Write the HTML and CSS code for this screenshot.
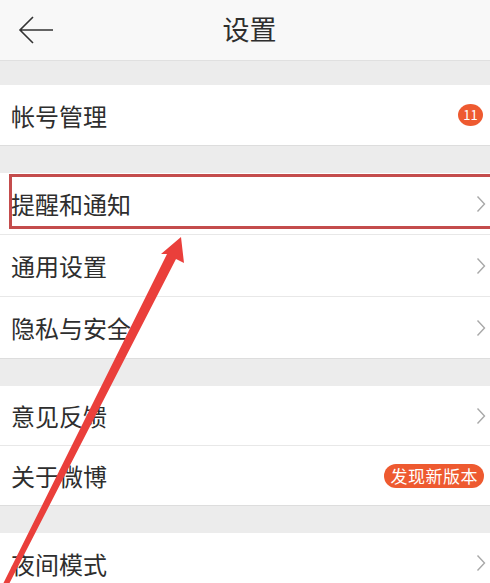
FILE: index.html
```html
<!DOCTYPE html>
<html lang="zh-CN">
<head>
    <meta charset="UTF-8">
    <title>设置</title>
    <link rel="stylesheet" href="styles.css">
</head>
<body>
  <div class="header">
    <svg class="back" width="40" height="30" viewBox="0 0 40 30">
      <path d="M36 15 H3 M16 2 L3 15 L16 28" fill="none" stroke="#333" stroke-width="1.6"/>
    </svg>
    <p class="title">设置</p>
  </div>

  <div class="group">
    <div class="row">
      <p class="label">帐号管理</p>
      <span class="dot">11</span>
    </div>
  </div>

  <div class="group mid">
    <div class="row">
      <p class="label">提醒和通知</p>
      <svg class="chev" width="10" height="18" viewBox="0 0 10 18"><path d="M1.5 1.5 L8.5 9 L1.5 16.5" fill="none" stroke="#a8a8a8" stroke-width="1.4"/></svg>
      <div class="box"></div>
    </div>
    <div class="row">
      <p class="label">通用设置</p>
      <svg class="chev" width="10" height="18" viewBox="0 0 10 18"><path d="M1.5 1.5 L8.5 9 L1.5 16.5" fill="none" stroke="#a8a8a8" stroke-width="1.4"/></svg>
    </div>
    <div class="row">
      <p class="label">隐私与安全</p>
      <svg class="chev" width="10" height="18" viewBox="0 0 10 18"><path d="M1.5 1.5 L8.5 9 L1.5 16.5" fill="none" stroke="#a8a8a8" stroke-width="1.4"/></svg>
    </div>
  </div>

  <div class="group low">
    <div class="row">
      <p class="label">意见反馈</p>
      <svg class="chev" width="10" height="18" viewBox="0 0 10 18"><path d="M1.5 1.5 L8.5 9 L1.5 16.5" fill="none" stroke="#a8a8a8" stroke-width="1.4"/></svg>
    </div>
    <div class="row">
      <p class="label">关于微博</p>
      <span class="pill">发现新版本</span>
    </div>
  </div>

  <div class="group">
    <div class="row">
      <p class="label">夜间模式</p>
      <svg class="chev" width="10" height="18" viewBox="0 0 10 18"><path d="M1.5 1.5 L8.5 9 L1.5 16.5" fill="none" stroke="#a8a8a8" stroke-width="1.4"/></svg>
    </div>
  </div>

  <svg class="arrow" width="490" height="583" viewBox="0 0 490 583">
    <polygon points="181,237 184,263 176,259 8,586 2,586 167,254 161,254" fill="#ea3f3b"/>
  </svg>
</body>
</html>
```

FILE: styles.css
```css
body {
	margin: 0;
	background-color: #ececec;
	font-family: "Noto Sans CJK SC", "Noto Sans", sans-serif;
	color: #2e2e2e;
	overflow: hidden;
	position: relative;
}
p {
	margin: 0;
}
.header {
	height: 60px;
	background-color: #f8f8f8;
	border-bottom: 1px solid #e0e0e0;
	display: flex;
	align-items: center;
	justify-content: center;
	position: relative;
}
.back {
	position: absolute;
	left: 17px;
	top: 15px;
}
.title {
	font-size: 27px;
	margin-left: 9px;
	margin-top: -3px;
}
.group {
	margin-top: 27px;
	background-color: #ffffff;
	border-bottom: 1px solid #dddddd;
}
.header + .group {
	margin-top: 24px;
}
.row {
	height: 60px;
	display: flex;
	align-items: center;
	justify-content: space-between;
	padding: 0 6px 0 11px;
	position: relative;
}
.mid .row {
	height: 61px;
}
.low .row {
	height: 59px;
}
.row + .row {
	border-top: 1px solid #e8e8e8;
}
.label {
	font-size: 24px;
}
.dot {
	width: 25px;
	height: 22px;
	border-radius: 50%;
	background-color: #ee5a30;
	color: #ffffff;
	font-size: 13px;
	line-height: 22px;
	text-align: center;
	margin-right: 1px;
}
.chev {
	margin-right: -2px;
}
.pill {
	background-color: #ee5a30;
	color: #ffffff;
	font-size: 17px;
	line-height: 24px;
	padding: 0 6px 0 7px;
	letter-spacing: 0.5px;
	border-radius: 12px;
}
.box {
	position: absolute;
	left: 9px;
	right: -6px;
	top: 1px;
	height: 49px;
	border: 3px solid #c44c4c;
}
.arrow {
	position: absolute;
	left: 0;
	top: 0;
}
```
